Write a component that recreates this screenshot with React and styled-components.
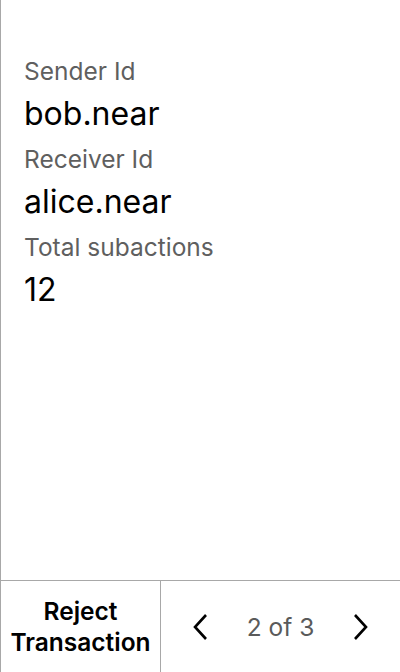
import React from "react";
import styled, { createGlobalStyle } from "styled-components";

const Global = createGlobalStyle`
  html, body { margin: 0; padding: 0; background: #fff; }
  body { font-family: Inter, "Noto Sans", sans-serif; }
  #root { height: 672px; }
`;

const Screen = styled.div`
  box-sizing: border-box;
  height: 672px;
  width: 400px;
  border-left: 1px solid #a8a8a8;
  display: flex;
  flex-direction: column;
`;

const Content = styled.div`
  flex: 1;
  padding: 56px 23px 0 23px;
  display: flex;
  flex-direction: column;
`;

const Field = styled.div`
  display: flex;
  flex-direction: column;
  gap: 9px;
  margin-bottom: 11px;
`;

const Label = styled.div`
  font-size: 24.5px;
  line-height: 30px;
  color: #5f5f5f;
`;

const Value = styled.div`
  font-size: 32px;
  line-height: 38px;
  color: #000;
`;

const Footer = styled.div`
  box-sizing: border-box;
  height: 92px;
  border-top: 1px solid #a8a8a8;
  display: grid;
  grid-template-columns: 160px 1fr;
`;

const RejectButton = styled.button`
  all: unset;
  box-sizing: border-box;
  border-right: 1px solid #a8a8a8;
  display: flex;
  align-items: center;
  justify-content: center;
  text-align: center;
  font-family: Inter, "Noto Sans", sans-serif;
  font-weight: 600;
  font-size: 24.5px;
  line-height: 31px;
  color: #000;
`;

const Pager = styled.div`
  display: flex;
  align-items: center;
  justify-content: space-between;
  padding: 0 30px;
`;

const NavButton = styled.button`
  all: unset;
  display: flex;
  align-items: center;
  justify-content: center;
  width: 20px;
  height: 30px;
`;

const PageText = styled.span`
  font-size: 24.5px;
  color: #5a5a5a;
`;

const Chevron = ({ dir }) => (
  <svg width="18" height="28" viewBox="0 0 18 28" fill="none">
    <path
      d={dir === "left" ? "M14 2 L3 14 L14 26" : "M4 2 L15 14 L4 26"}
      stroke="#000"
      strokeWidth="2.6"
      strokeLinecap="butt"
      strokeLinejoin="miter"
    />
  </svg>
);

const fields = [
  { label: "Sender Id", value: "bob.near" },
  { label: "Receiver Id", value: "alice.near" },
  { label: "Total subactions", value: "12" },
];

export default function App() {
  return (
    <>
      <Global />
      <Screen>
        <Content>
          {fields.map((f) => (
            <Field key={f.label}>
              <Label>{f.label}</Label>
              <Value>{f.value}</Value>
            </Field>
          ))}
        </Content>
        <Footer>
          <RejectButton>
            Reject
            <br />
            Transaction
          </RejectButton>
          <Pager>
            <NavButton aria-label="Previous">
              <Chevron dir="left" />
            </NavButton>
            <PageText>2 of 3</PageText>
            <NavButton aria-label="Next">
              <Chevron dir="right" />
            </NavButton>
          </Pager>
        </Footer>
      </Screen>
    </>
  );
}
